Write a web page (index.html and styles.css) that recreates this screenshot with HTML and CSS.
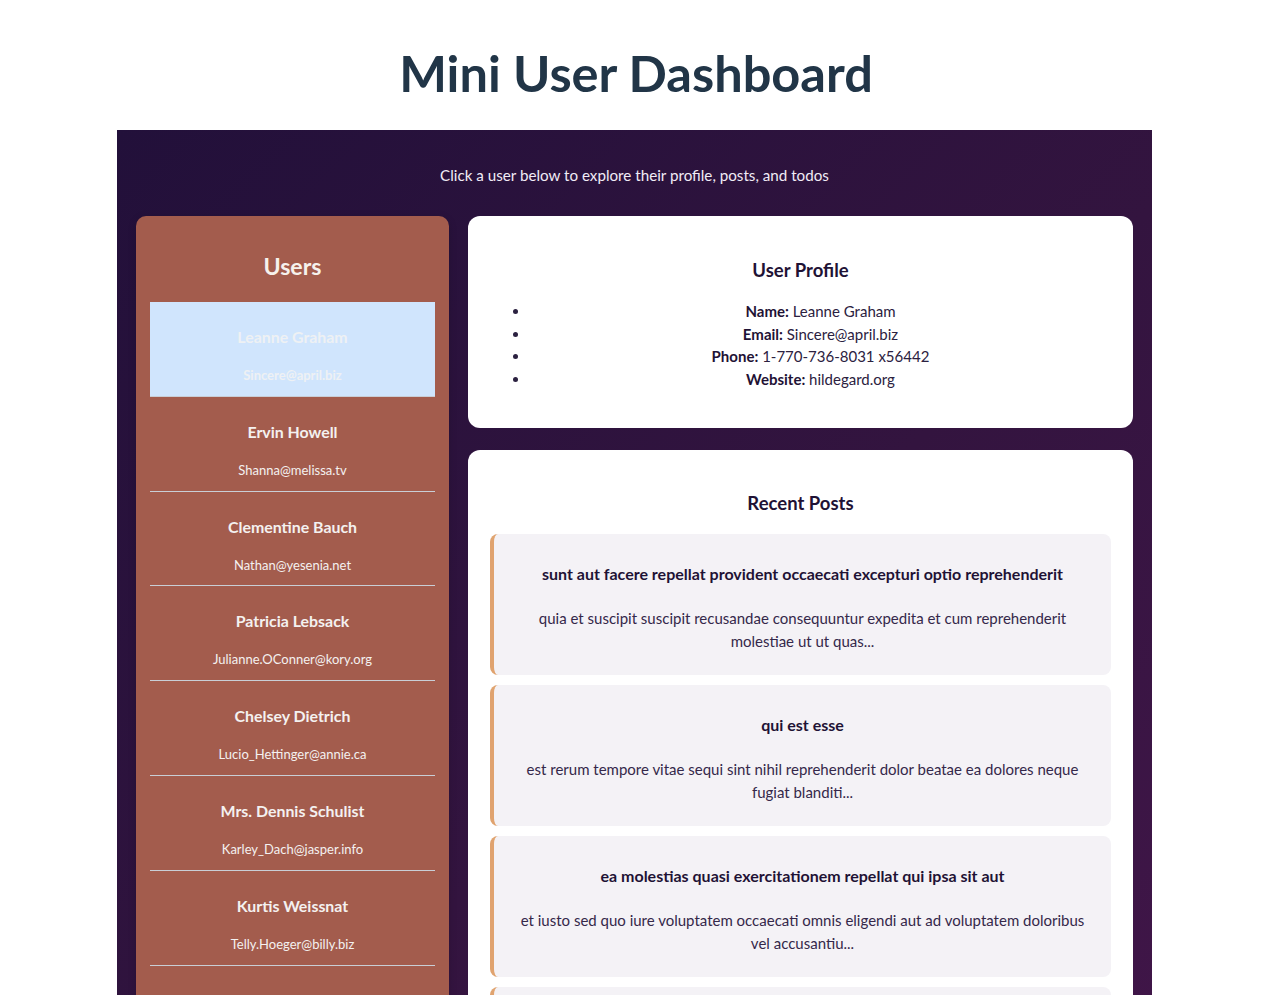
FILE: index.html
```html
<!DOCTYPE html>
<html lang="en">
<head>
<meta charset="utf-8">
<title>Mini User Dashboard</title>
<link rel="stylesheet" href="styles.css">
</head>
<body>
<h1 class="page-title">Mini User Dashboard</h1>
<div class="app">
  <p class="subtitle">Click a user below to explore their profile, posts, and todos</p>
  <div class="layout">
    <aside class="sidebar">
      <h2 class="sidebar-title">Users</h2>
      <ul class="user-list">
        <li class="user active"><div class="user-name">Leanne Graham</div><div class="user-email">Sincere@april.biz</div></li>
        <li class="user"><div class="user-name">Ervin Howell</div><div class="user-email">Shanna@melissa.tv</div></li>
        <li class="user"><div class="user-name">Clementine Bauch</div><div class="user-email">Nathan@yesenia.net</div></li>
        <li class="user"><div class="user-name">Patricia Lebsack</div><div class="user-email">Julianne.OConner@kory.org</div></li>
        <li class="user"><div class="user-name">Chelsey Dietrich</div><div class="user-email">Lucio_Hettinger@annie.ca</div></li>
        <li class="user"><div class="user-name">Mrs. Dennis Schulist</div><div class="user-email">Karley_Dach@jasper.info</div></li>
        <li class="user"><div class="user-name">Kurtis Weissnat</div><div class="user-email">Telly.Hoeger@billy.biz</div></li>
        <li class="user"><div class="user-name">Nicholas Runolfsdottir V</div><div class="user-email">Sherwood@rosamond.me</div></li>
        <li class="user"><div class="user-name">Glenna Reichert</div><div class="user-email">Chaim_McDermott@dana.io</div></li>
        <li class="user"><div class="user-name">Clementina DuBuque</div><div class="user-email">Rey.Padberg@karina.biz</div></li>
      </ul>
    </aside>
    <main class="content">
      <section class="card">
        <h3 class="card-title">User Profile</h3>
        <ul class="profile-list">
          <li><strong>Name:</strong> Leanne Graham</li>
          <li><strong>Email:</strong> Sincere@april.biz</li>
          <li><strong>Phone:</strong> 1-770-736-8031 x56442</li>
          <li><strong>Website:</strong> hildegard.org</li>
        </ul>
      </section>
      <section class="card">
        <h3 class="card-title posts-title">Recent Posts</h3>
        <div class="posts">
          <article class="post">
            <h4 class="post-title">sunt aut facere repellat provident occaecati excepturi optio reprehenderit</h4>
            <p class="post-body">quia et suscipit suscipit recusandae consequuntur expedita et cum reprehenderit molestiae ut ut quas...</p>
          </article>
          <article class="post">
            <h4 class="post-title">qui est esse</h4>
            <p class="post-body">est rerum tempore vitae sequi sint nihil reprehenderit dolor beatae ea dolores neque fugiat blanditi...</p>
          </article>
          <article class="post">
            <h4 class="post-title">ea molestias quasi exercitationem repellat qui ipsa sit aut</h4>
            <p class="post-body">et iusto sed quo iure voluptatem occaecati omnis eligendi aut ad voluptatem doloribus vel accusantiu...</p>
          </article>
          <article class="post">
            <h4 class="post-title">eum et est occaecati</h4>
            <p class="post-body">ullam et saepe reiciendis voluptatem adipisci sit amet autem assumenda provident rerum culpa quis hi...</p>
          </article>
          <article class="post">
            <h4 class="post-title">nesciunt quas odio</h4>
            <p class="post-body">repudiandae veniam quaerat sunt sed alias aut fugiat sit autem sed est voluptatem omnis possimus ess...</p>
          </article>
        </div>
      </section>
    </main>
  </div>
</div>
</body>
</html>
```
FILE: styles.css
```css
* { box-sizing: border-box; }

body {
  margin: 0;
  background: #ffffff;
  font-family: "Lato", "Noto Sans", sans-serif;
  color: #1f1235;
}

.page-title {
  margin: 43px 0 27px;
  font-size: 50.5px;
  line-height: 60px;
  font-weight: 700;
  text-align: center;
  color: #213547;
}

.app {
  width: 1035px;
  margin: 0 0 0 calc(50% - 519px);
  padding: 19px;
  background: linear-gradient(135deg, #22103a 0%, #33143f 50%, #44164b 100%);
}

.subtitle {
  margin: 15px 0 30px;
  font-size: 15.2px;
  line-height: 22px;
  text-align: center;
  color: #f1ecf6;
}

.layout {
  display: grid;
  grid-template-columns: 313px 1fr;
  gap: 19px;
  align-items: start;
}

.sidebar {
  background: #a35c4d;
  border-radius: 10px;
  padding: 14px;
  box-shadow: 0 2px 8px rgba(0, 0, 0, 0.15);
}

.sidebar-title {
  margin: 21px 0;
  font-size: 23.2px;
  line-height: 30px;
  font-weight: 700;
  text-align: center;
  color: #f6f1ec;
}

.user-list {
  list-style: none;
  margin: 0;
  padding: 0;
}

.user {
  height: 94.8px;
  padding-top: 24px;
  border-bottom: 1px solid #c9ced6;
  text-align: center;
  color: #f4f1f0;
}

.user.active {
  background: #d0e5fd;
  color: #eef1f4;
}

.user-name {
  font-size: 15.9px;
  line-height: 22px;
  font-weight: 700;
}

.user-email {
  margin-top: 17px;
  font-size: 13px;
  line-height: 20px;
}

.user.active .user-email {
  font-weight: 700;
}

.content {
  display: flex;
  flex-direction: column;
  gap: 22px;
}

.card {
  background: #ffffff;
  border-radius: 12px;
  padding: 22px;
}

.card-title {
  margin: 20px 0 18px;
  font-size: 18.5px;
  line-height: 24px;
  font-weight: 700;
  text-align: center;
  color: #1f1235;
}

.posts-title {
  margin: 19px 0 19px;
}

.profile-list {
  margin: 0 0 16px;
  padding-left: 40px;
  font-size: 15px;
  line-height: 22.6px;
  text-align: center;
  color: #2b2140;
}

.profile-list strong {
  color: #1f1235;
}

.posts {
  display: flex;
  flex-direction: column;
  gap: 10px;
}

.post {
  height: 141px;
  background: #f4f2f6;
  border-left: 4px solid #e0a36f;
  border-radius: 8px;
  padding: 16px 18px;
  text-align: center;
}

.post-title {
  margin: 13px 0 22px;
  font-size: 16px;
  line-height: 22px;
  font-weight: 700;
  color: #1f1235;
}

.post-body {
  margin: 0;
  font-size: 15px;
  line-height: 22.5px;
  color: #35284a;
}
```
